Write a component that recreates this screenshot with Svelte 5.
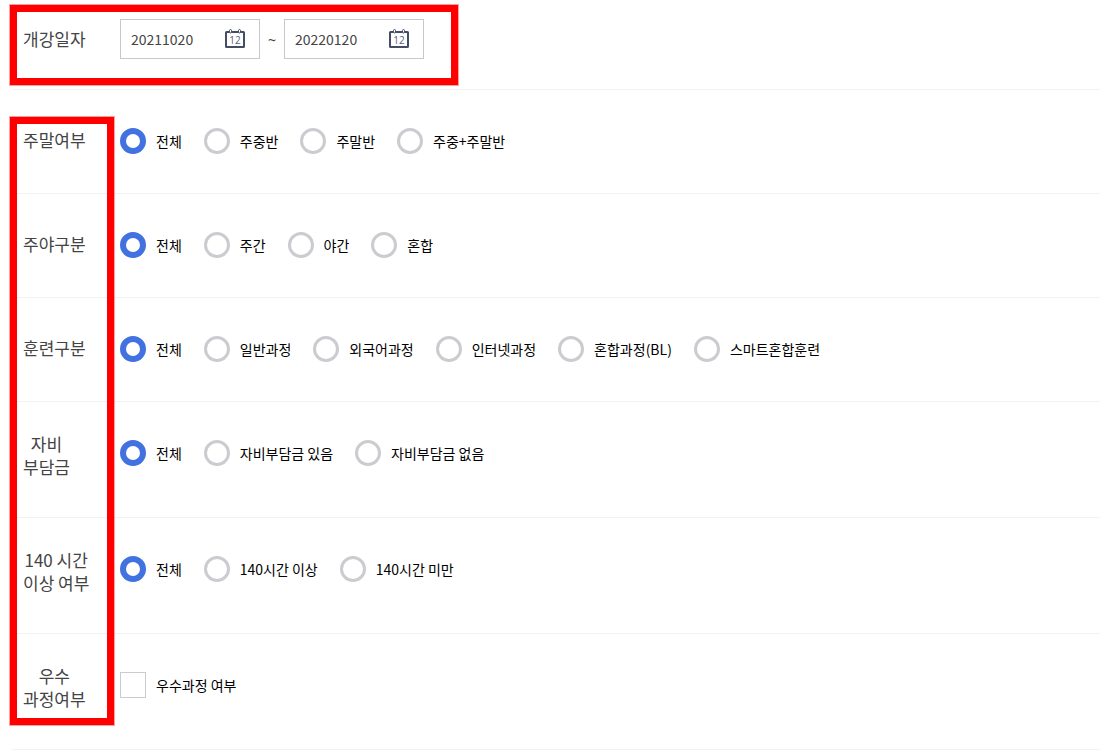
<script>
  const dates = $state([
    { id: 'start-date', name: '개강 시작일', value: '20211020' },
    { id: 'end-date', name: '개강 종료일', value: '20220120' }
  ]);

  const groups = $state([
    { id: 'weekend', lines: ['주말여부'], options: ['전체', '주중반', '주말반', '주중+주말반'], selected: '전체' },
    { id: 'daytime', lines: ['주야구분'], options: ['전체', '주간', '야간', '혼합'], selected: '전체' },
    {
      id: 'training',
      lines: ['훈련구분'],
      options: ['전체', '일반과정', '외국어과정', '인터넷과정', '혼합과정(BL)', '스마트혼합훈련'],
      selected: '전체'
    },
    { id: 'payment', lines: ['자비', '부담금'], options: ['전체', '자비부담금 있음', '자비부담금 없음'], selected: '전체' },
    { id: 'hours', lines: ['140 시간', '이상 여부'], options: ['전체', '140시간 이상', '140시간 미만'], selected: '전체' }
  ]);

  let excellent = $state(false);
</script>

<form class="filters">
  <div class="row first" role="group" aria-labelledby="date-label">
    <div class="label" id="date-label">개강일자</div>
    <div class="dates">
      {#each dates as date, i}
        {#if i > 0}<span class="tilde">~</span>{/if}
        <div class="date">
          <input id={date.id} type="text" aria-label={date.name} bind:value={date.value} />
          <button type="button" aria-label="{date.name} 선택">
            <svg width="20" height="20" viewBox="0 0 20 20" fill="none" aria-hidden="true">
              <rect x="1" y="3" width="18" height="15" rx="0.5" stroke="#454d64" stroke-width="2" />
              <rect x="4.5" y="0.5" width="2" height="3.5" rx="1" fill="#fff" stroke="#454d64" />
              <rect x="13.5" y="0.5" width="2" height="3.5" rx="1" fill="#fff" stroke="#454d64" />
              <text x="10" y="14.500" text-anchor="middle" fill="#5c6377">12</text>
            </svg>
          </button>
        </div>
      {/each}
    </div>
  </div>

  {#each groups as group}
    <div class="row" class:tall={group.lines.length > 1} role="radiogroup" aria-labelledby="{group.id}-label">
      <div class="label" id="{group.id}-label">
        {#each group.lines as line}<span>{line}</span>{/each}
      </div>
      <div class="options">
        {#each group.options as option}
          <label class="option">
            <input type="radio" name={group.id} value={option} bind:group={group.selected} />
            <span>{option}</span>
          </label>
        {/each}
      </div>
    </div>
  {/each}

  <div class="row tall" role="group" aria-labelledby="excellent-label">
    <div class="label" id="excellent-label"><span>우수</span><span>과정여부</span></div>
    <div class="options">
      <label class="option">
        <input type="checkbox" bind:checked={excellent} />
        <span>우수과정 여부</span>
      </label>
    </div>
  </div>

  <div class="frame date-frame"></div>
  <div class="frame label-frame"></div>
</form>

<style>
  :global(body) {
    background: #fff;
  }

  .filters {
    position: relative;
    padding: 0 19px 0 12px;
    font-family: 'Noto Sans CJK KR', 'Noto Sans', sans-serif;
    font-size: 14px;
    color: #000;
  }

  .row {
    display: grid;
    grid-template-columns: 97px 1fr;
    align-items: start;
    padding: 30px 0 30px 11px;
    border-bottom: 1px solid #f2f2f2;
  }

  .row.first {
    padding-top: 19px;
  }

  .label {
    justify-self: start;
    display: flex;
    flex-direction: column;
    align-items: center;
    font-size: 17px;
    line-height: 40px;
    color: #444;
    white-space: nowrap;
  }

  .tall .label {
    padding-bottom: 9px;
    line-height: 23px;
  }

  .dates {
    display: flex;
    align-items: center;
  }

  .date {
    display: flex;
    align-items: center;
    box-sizing: border-box;
    width: 140px;
    height: 40px;
    padding: 0 14px 0 10px;
    border: 1px solid #c8c8cc;
  }

  .date input {
    flex: 1;
    min-width: 0;
    padding: 0;
    border: 0;
    background: none;
    font: inherit;
    color: #444;
    outline: none;
  }

  .date button {
    display: flex;
    padding: 0;
    border: 0;
    background: none;
    cursor: pointer;
  }

  .date text {
    font-family: 'Open Sans', sans-serif;
    font-size: 10px;
  }

  .tilde {
    width: 24px;
    font-family: 'Noto Sans', sans-serif;
    text-align: center;
    color: #444;
  }

  .options {
    display: flex;
    flex-wrap: wrap;
    gap: 8px 22px;
    padding: 8px 0 9px;
  }

  .tall .options {
    padding-bottom: 21px;
  }

  .option {
    display: flex;
    align-items: center;
    gap: 10px;
    height: 26px;
    cursor: pointer;
  }

  .option span {
    line-height: 24px;
    white-space: nowrap;
  }

  .option input {
    appearance: none;
    box-sizing: border-box;
    width: 26px;
    height: 26px;
    margin: 0;
    border: 3px solid #cbccd0;
    border-radius: 50%;
    background: #fff;
  }

  .option input[type='radio']:checked {
    border: 6px solid #4272df;
  }

  .option input[type='checkbox'] {
    border-width: 1px;
    border-radius: 0;
  }

  .option input[type='checkbox']:checked {
    border-color: #4272df;
    background: #4272df;
  }

  .frame {
    position: absolute;
    left: 10px;
    box-sizing: border-box;
    border: 7px solid #f00;
    box-shadow: 0 0 0 1px #ff000060;
    pointer-events: none;
  }

  .date-frame {
    top: 5px;
    width: 448px;
    height: 80px;
  }

  .label-frame {
    top: 117px;
    bottom: 25px;
    width: 104px;
  }
</style>
